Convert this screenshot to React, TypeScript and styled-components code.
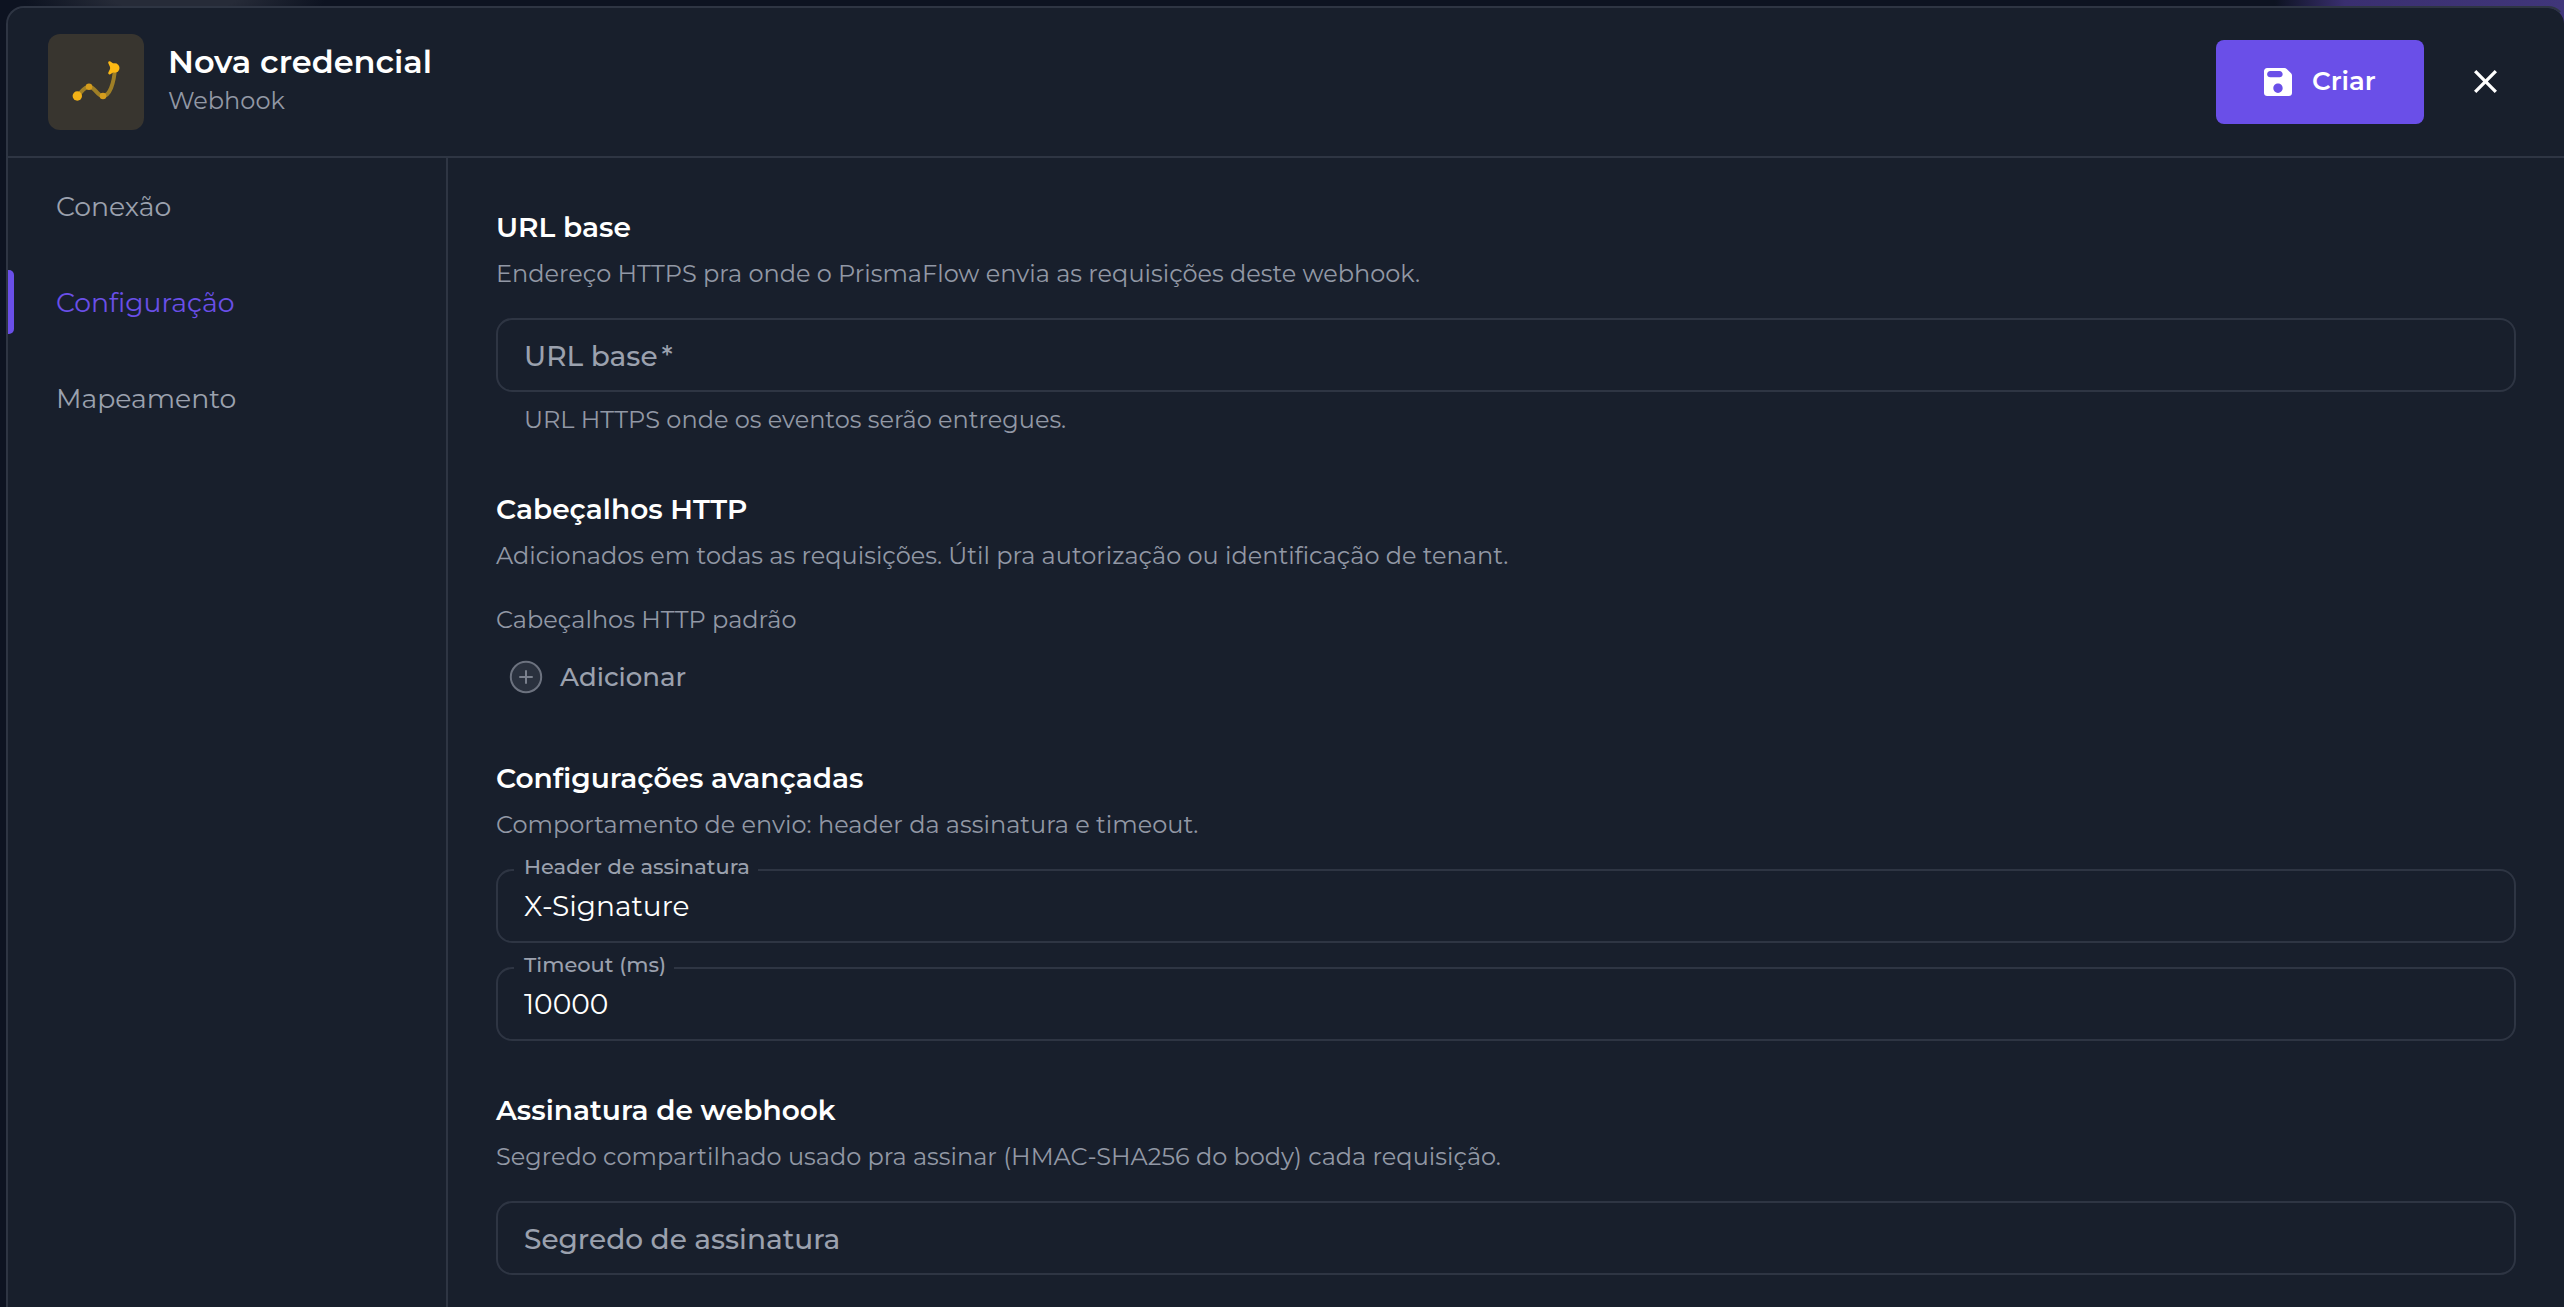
import React from "react";
import styled, { createGlobalStyle } from "styled-components";

const color = {
  surface: "#181f2c",
  line: "#2e3543",
  muted: "#9298a5",
  label: "#9ba1ae",
  accent: "#6a4fe8",
  white: "#ffffff",
};

const GlobalStyle = createGlobalStyle`
  * { box-sizing: border-box; }
  body {
    margin: 0;
    overflow: hidden;
    background: #0d1321;
    font-family: Montserrat, Inter, "Open Sans", sans-serif;
    -webkit-font-smoothing: antialiased;
  }
`;

const Backdrop = styled.div`
  height: 1307px;
  width: 2564px;
  padding: 6px 0 0 6px;
  overflow: hidden;
  background:
    radial-gradient(ellipse 150px 26px at 175px 0, #262b38 40%, transparent 100%),
    linear-gradient(90deg, transparent 2275px, #3a2f70 2345px, #40367a 2564px) top / 100% 40px no-repeat,
    #0d1321;
`;

const Modal = styled.div`
  display: flex;
  flex-direction: column;
  width: 2560px;
  height: 1330px;
  border: 2px solid ${color.line};
  border-right-color: transparent;
  border-radius: 18px;
  background: ${color.surface};
  background-clip: padding-box;
`;

const Header = styled.header`
  display: flex;
  align-items: center;
  flex: none;
  height: 150px;
  padding: 0 66px 0 40px;
  border-bottom: 2px solid ${color.line};
`;

const LogoTile = styled.div`
  display: flex;
  width: 96px;
  height: 96px;
  border-radius: 12px;
  background: #38352f;
`;

const Titles = styled.div`
  flex: 1;
  padding: 0 0 5px 24px;
`;

const Title = styled.h1`
  margin: 0;
  font-size: 32px;
  font-weight: 600;
  line-height: 42px;
  color: ${color.white};
`;

const Subtitle = styled.p`
  margin: 0;
  font-size: 24px;
  line-height: 36px;
  color: ${color.muted};
`;

const CreateButton = styled.button`
  display: flex;
  align-items: center;
  gap: 20px;
  width: 208px;
  height: 84px;
  padding: 0 48px;
  border: 0;
  border-radius: 8px;
  background: ${color.accent};
  color: ${color.white};
  font: inherit;
  font-size: 26px;
  font-weight: 600;
  line-height: 32px;
`;

const ButtonText = styled.span`
  padding-bottom: 2px;
`;

const CloseButton = styled.button`
  display: flex;
  margin: 0 1px 1px 50px;
  padding: 0;
  border: 0;
  background: none;
  color: ${color.white};
`;

const Body = styled.div`
  display: flex;
  flex: 1;
  min-height: 0;
`;

const Sidebar = styled.nav`
  width: 440px;
  flex: none;
  border-right: 2px solid ${color.line};
`;

const NavItem = styled.a<{ $active?: boolean }>`
  display: flex;
  align-items: center;
  height: 96px;
  font-size: 26.7px;
  color: ${(p) => (p.$active ? color.accent : color.label)};

  &::before {
    content: "";
    width: 6px;
    height: 64px;
    margin-right: 42px;
    border-radius: 0 5px 5px 0;
    background: ${(p) => (p.$active ? color.accent : "transparent")};
  }
`;

const Content = styled.main`
  display: flex;
  flex-direction: column;
  flex: 1;
  gap: 52px;
  padding: 52px 48px 0;
`;

const Section = styled.section`
  display: flex;
  flex-direction: column;
`;

const Heading = styled.h2`
  margin: 0 0 10px;
  font-size: 28px;
  font-weight: 600;
  line-height: 34px;
  color: ${color.white};
`;

const Text = styled.p`
  margin: 0 0 25px;
  font-size: 24px;
  line-height: 39px;
  color: ${color.muted};
`;

const FieldGroup = styled.div`
  display: flex;
  flex-direction: column;
  gap: 24px;
`;

const GroupLabel = styled.div`
  font-size: 24px;
  line-height: 39px;
  color: ${color.muted};
`;

const FieldBox = styled.div`
  position: relative;
  display: flex;
  align-items: center;
  height: 74px;
  padding: 0 26px;
  border: 2px solid ${color.line};
  border-radius: 16px;
`;

const Placeholder = styled.span`
  padding-top: 1px;
  font-size: 28px;
  font-weight: 500;
  line-height: 34px;
  color: ${color.label};
`;

const Required = styled.span`
  margin-left: 4px;
`;

const Value = styled.span`
  font-size: 28px;
  line-height: 34px;
  color: ${color.white};
`;

const FloatingLabel = styled.span`
  position: absolute;
  top: -17px;
  left: 16px;
  padding: 0 8px 0 10px;
  background: ${color.surface};
  font-size: 21px;
  font-weight: 500;
  line-height: 26px;
  color: ${color.label};
`;

const Helper = styled.div`
  margin-top: 7px;
  padding-left: 28px;
  font-size: 24px;
  line-height: 41px;
  color: ${color.muted};
`;

const AddButton = styled.button`
  display: flex;
  align-items: center;
  align-self: flex-start;
  gap: 17px;
  height: 54px;
  margin: 11px 0 5px;
  padding: 0 13px;
  border: 0;
  background: none;
  color: ${color.label};
  font: inherit;
  font-size: 26px;
  font-weight: 500;
`;

const FlowLogo = () => (
  <svg width="96" height="96" viewBox="48 34 96 96" fill="none">
    <path
      d="M77.3 96C81 93 84 86.7 89 86.7C95 86.7 97 96 103 96C109.500 96 114 84 115 68"
      stroke="#9f7f26"
      strokeWidth="4"
    />
    <circle cx="77.3" cy="96" r="4.700" fill="#f2b116" />
    <circle cx="89" cy="86.700" r="3.300" fill="#d59d1d" />
    <circle cx="103" cy="96" r="3.300" fill="#d59d1d" />
    <circle cx="114.800" cy="68" r="4.700" fill="#fdb914" />
    <path
      d="M109.600 62.600L115 66.500V69.500L109.600 73L112 68Z"
      fill="#fdb914"
      stroke="#fdb914"
      strokeWidth="2.800"
      strokeLinejoin="round"
    />
  </svg>
);

const SaveIcon = () => (
  <svg width="28" height="28" viewBox="3 3 18 18" fill="currentColor">
    <path d="M17.590 3.590c-.38-.38-.89-.59-1.420-.59H5c-1.110 0-2 .9-2 2v14c0 1.100.9 2 2 2h14c1.100 0 2-.9 2-2V7.830c0-.53-.21-1.040-.59-1.410l-2.820-2.830zM12 19c-1.660 0-3-1.340-3-3s1.340-3 3-3 3 1.340 3 3-1.340 3-3 3zm1-10H7c-1.100 0-2-.9-2-2s.9-2 2-2h6c1.100 0 2 .9 2 2s-.9 2-2 2z" />
  </svg>
);

const CloseIcon = () => (
  <svg width="23" height="23" viewBox="5 5 14 14" fill="currentColor">
    <path d="M19 6.410 17.590 5 12 10.590 6.410 5 5 6.410 10.590 12 5 17.590 6.410 19 12 13.410 17.590 19 19 17.590 13.410 12z" />
  </svg>
);

const PlusCircleIcon = () => (
  <svg width="34" height="34" viewBox="0 0 34 34">
    <circle cx="17" cy="17" r="15.200" fill="#2a313e" stroke="#6c727f" strokeWidth="2" />
    <path d="M17 11v12M11 17h12" stroke="#7a808d" strokeWidth="2" strokeLinecap="round" />
  </svg>
);

type FieldProps = { label: string; value?: string; required?: boolean };

const Field = ({ label, value, required }: FieldProps) => (
  <FieldBox>
    {value ? (
      <>
        <FloatingLabel>{label}</FloatingLabel>
        <Value>{value}</Value>
      </>
    ) : (
      <Placeholder>
        {label}
        {required && <Required>*</Required>}
      </Placeholder>
    )}
  </FieldBox>
);

export default function App() {
  return (
    <>
      <GlobalStyle />
      <Backdrop>
        <Modal>
          <Header>
            <LogoTile>
              <FlowLogo />
            </LogoTile>
            <Titles>
              <Title>Nova credencial</Title>
              <Subtitle>Webhook</Subtitle>
            </Titles>
            <CreateButton>
              <SaveIcon />
              <ButtonText>Criar</ButtonText>
            </CreateButton>
            <CloseButton aria-label="Fechar">
              <CloseIcon />
            </CloseButton>
          </Header>
          <Body>
            <Sidebar>
              <NavItem>Conexão</NavItem>
              <NavItem $active>Configuração</NavItem>
              <NavItem>Mapeamento</NavItem>
            </Sidebar>
            <Content>
              <Section>
                <Heading>URL base</Heading>
                <Text>Endereço HTTPS pra onde o PrismaFlow envia as requisições deste webhook.</Text>
                <Field label="URL base" required />
                <Helper>URL HTTPS onde os eventos serão entregues.</Helper>
              </Section>
              <Section>
                <Heading>Cabeçalhos HTTP</Heading>
                <Text>Adicionados em todas as requisições. Útil pra autorização ou identificação de tenant.</Text>
                <GroupLabel>Cabeçalhos HTTP padrão</GroupLabel>
                <AddButton>
                  <PlusCircleIcon />
                  Adicionar
                </AddButton>
              </Section>
              <Section>
                <Heading>Configurações avançadas</Heading>
                <Text>Comportamento de envio: header da assinatura e timeout.</Text>
                <FieldGroup>
                  <Field label="Header de assinatura" value="X-Signature" />
                  <Field label="Timeout (ms)" value="10000" />
                </FieldGroup>
              </Section>
              <Section>
                <Heading>Assinatura de webhook</Heading>
                <Text>Segredo compartilhado usado pra assinar (HMAC-SHA256 do body) cada requisição.</Text>
                <Field label="Segredo de assinatura" />
              </Section>
            </Content>
          </Body>
        </Modal>
      </Backdrop>
    </>
  );
}
